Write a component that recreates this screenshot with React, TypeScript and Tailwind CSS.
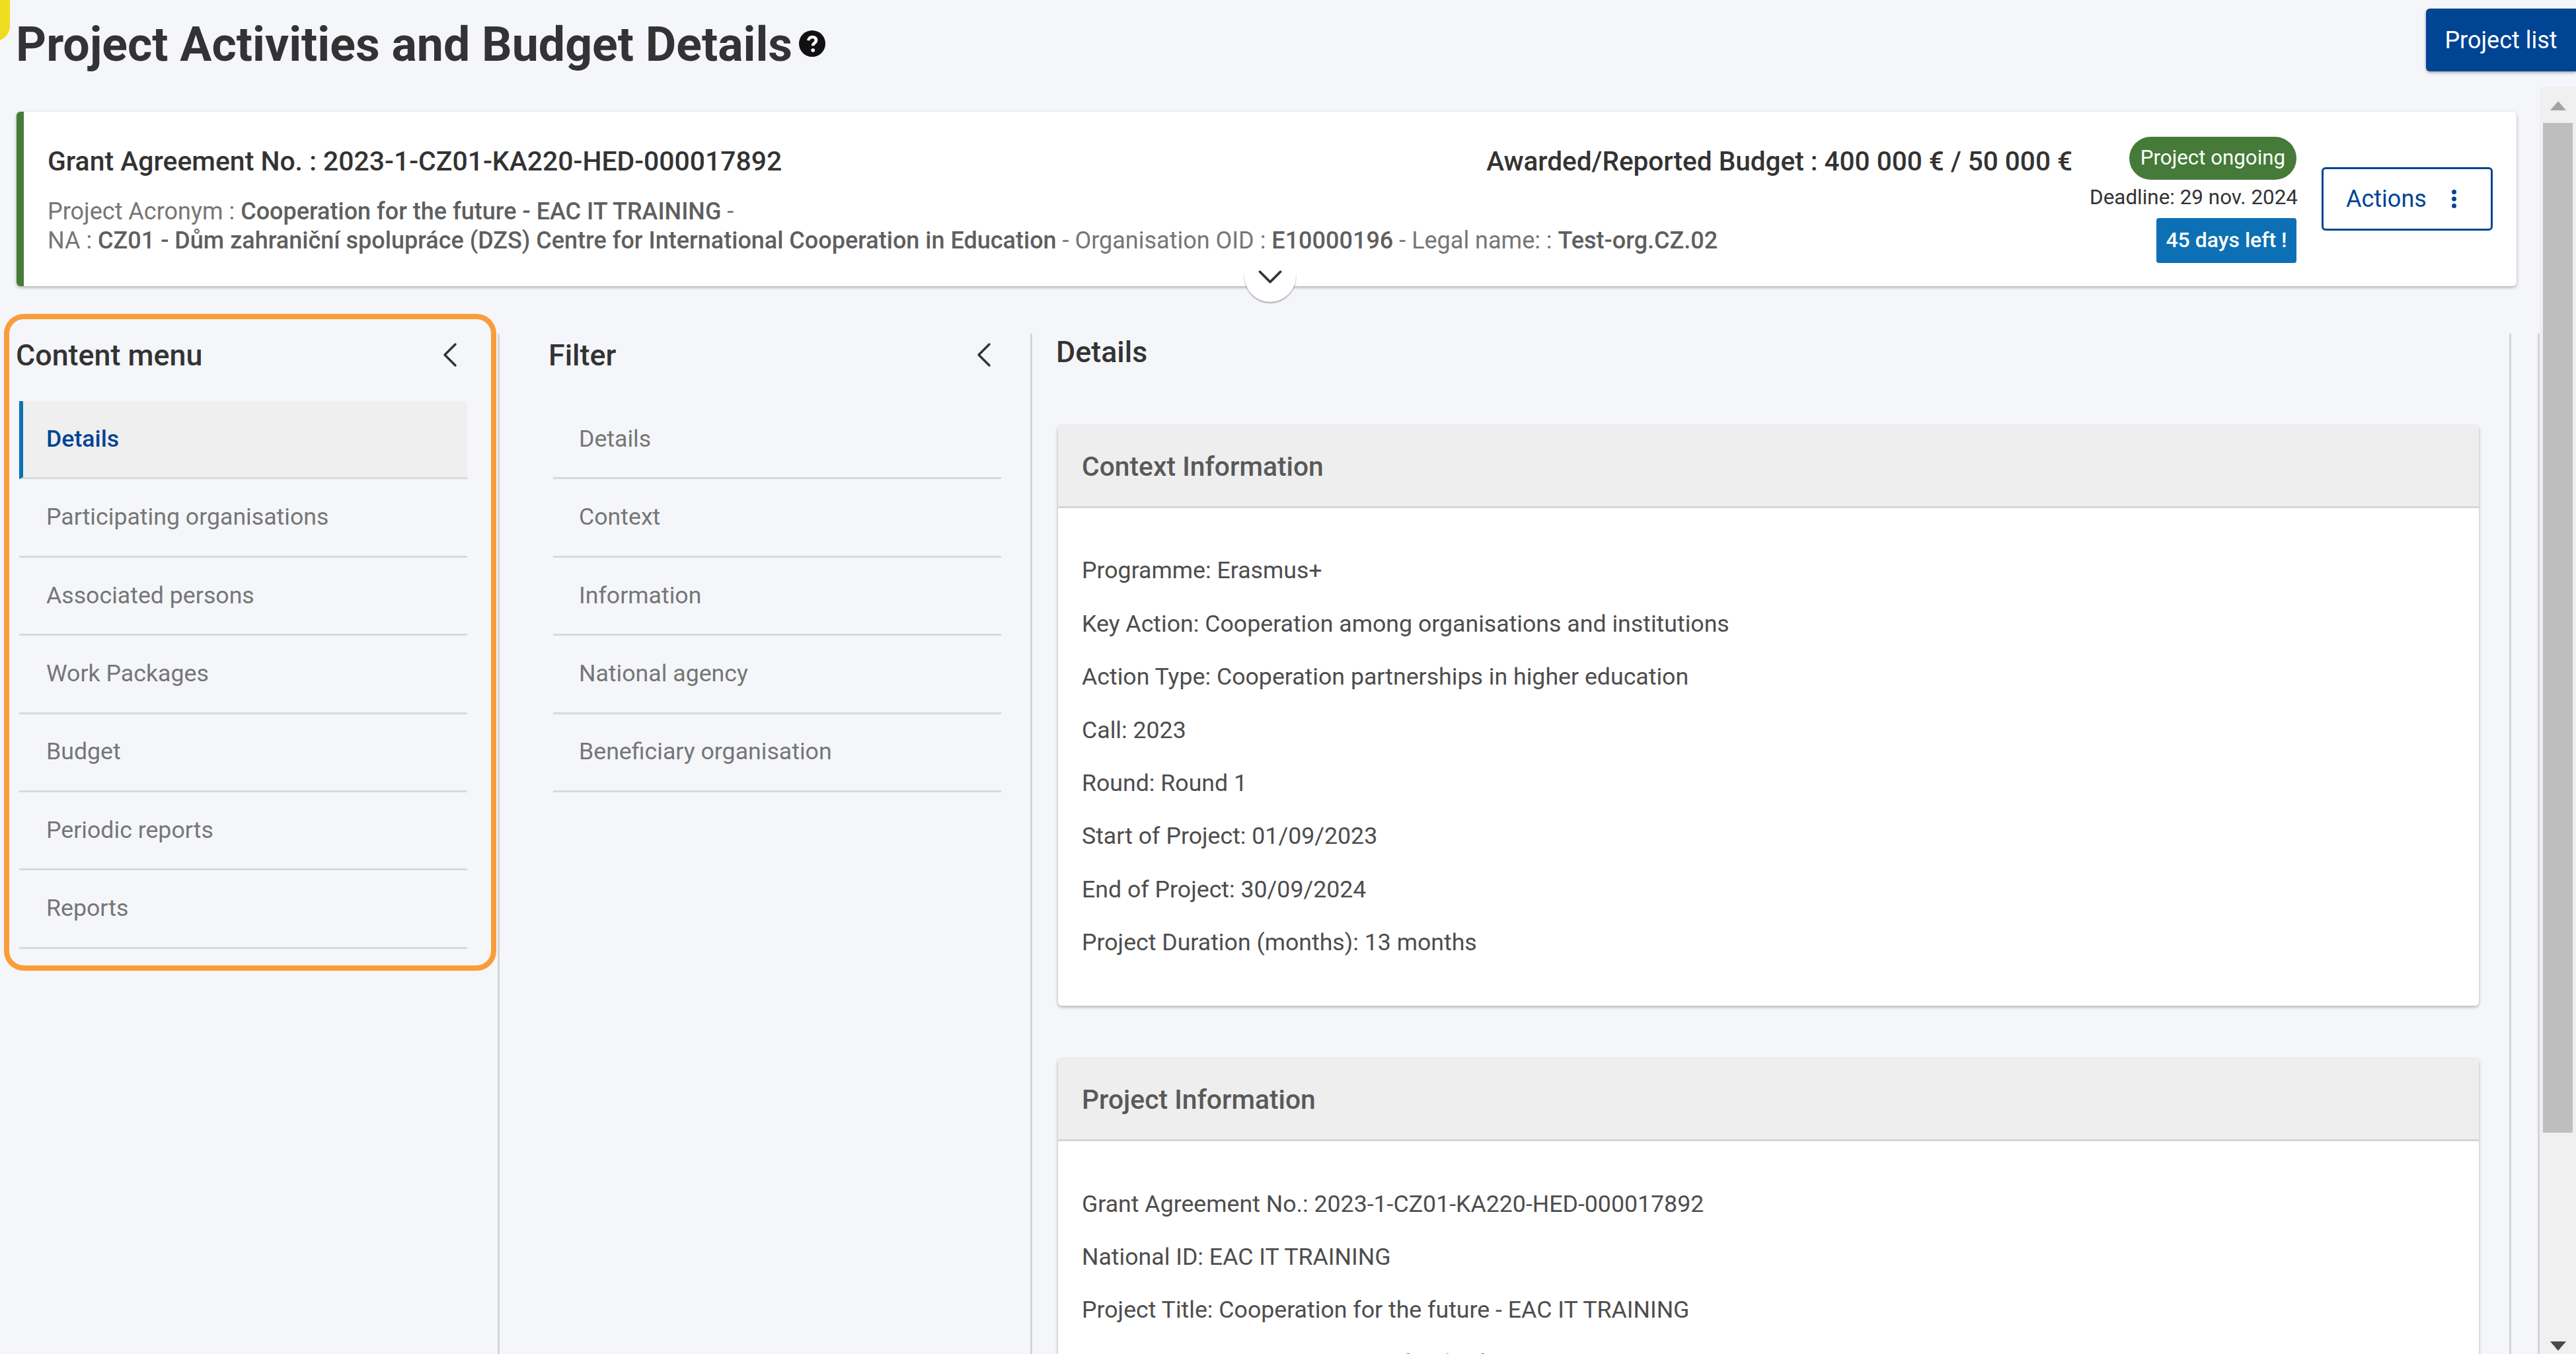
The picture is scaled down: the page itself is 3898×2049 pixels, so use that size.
import { ChevronDown, ChevronLeft } from "lucide-react";

const contentMenu = [
  "Details",
  "Participating organisations",
  "Associated persons",
  "Work Packages",
  "Budget",
  "Periodic reports",
  "Reports",
];

const filterMenu = ["Details", "Context", "Information", "National agency", "Beneficiary organisation"];

const contextLines = [
  "Programme: Erasmus+",
  "Key Action: Cooperation among organisations and institutions",
  "Action Type: Cooperation partnerships in higher education",
  "Call: 2023",
  "Round: Round 1",
  "Start of Project: 01/09/2023",
  "End of Project: 30/09/2024",
  "Project Duration (months): 13 months",
];

const projectLines = [
  "Grant Agreement No.: 2023-1-CZ01-KA220-HED-000017892",
  "National ID: EAC IT TRAINING",
  "Project Title: Cooperation for the future - EAC IT TRAINING",
  "Project Acronym: Cooperation for the future - EAC IT TRAINING",
];

function SideMenu({
  title,
  items,
  active,
  rowsClass,
  itemClass,
}: {
  title: string;
  items: string[];
  active?: string;
  rowsClass: string;
  itemClass: string;
}) {
  return (
    <div className="flex flex-col">
      <div className="mb-[36px] flex h-[66px] items-center justify-between">
        <h2 className="text-[44.8px] leading-none font-medium text-[#333333]">{title}</h2>
        <ChevronLeft size={64} strokeWidth={1.3} className="mt-[-2px] mr-[-6px] text-[#333333]" />
      </div>
      <div className={rowsClass}>
        {items.map((item) => (
          <div
            key={item}
            className={
              item === active
                ? "flex h-[118.4px] items-center border-b-[3px] border-l-[6px] border-b-[#d8d9dc] border-l-[#0e70b4] bg-[#efefef] pl-[35px] text-[35.7px] font-medium text-[#004494]"
                : `flex h-[118.4px] items-center border-b-[3px] border-b-[#d8d9dc] text-[35.7px] text-[#767676] ${itemClass}`
            }
          >
            {item}
          </div>
        ))}
      </div>
    </div>
  );
}

function InfoCard({ title, lines, className }: { title: string; lines: string[]; className?: string }) {
  return (
    <div className={`rounded-[6px] bg-white shadow-[0_2px_5px_rgba(0,0,0,0.3)] ${className ?? ""}`}>
      <div className="flex h-[125px] items-center rounded-t-[6px] border-b-[3px] border-[#d6d6d6] bg-[#eeeeee] pt-[3px] pl-[36px] text-[40.8px] font-medium text-[#595959]">
        {title}
      </div>
      <div className="px-[36px] pt-[55px] pb-[55px]">
        {lines.map((line) => (
          <div key={line} className="flex h-[80.4px] items-center text-[35.7px] text-[#4d4d4d]">
            {line}
          </div>
        ))}
      </div>
    </div>
  );
}

export default function App() {
  return (
    <div
      className="relative h-[2049px] w-[3898px] overflow-hidden bg-[#f5f6fa]"
      style={{ fontFamily: "Roboto, sans-serif" }}
    >
      <div className="absolute top-[-28px] left-[-30px] h-[90px] w-[45px] rounded-full bg-[#f0dc1e]" />

      <header className="flex h-[132px] items-start justify-between">
        <div className="flex items-center gap-[10px] pt-[26px] pl-[24px]">
          <h1 className="text-[71.6px] leading-[84px] font-bold text-[#333333]">
            Project Activities and Budget Details
          </h1>
          <svg viewBox="0 0 24 24" className="mt-[-5px] h-[40px] w-[40px]">
            <circle cx="12" cy="12" r="12" fill="#111111" />
            <path
              d="M8.6 9.2c.2-2 1.7-3.2 3.6-3.2 2 0 3.4 1.2 3.4 2.9 0 1.3-.7 2-1.7 2.7-.9.6-1.2 1-1.2 1.9v.5"
              fill="none"
              stroke="#ffffff"
              strokeWidth="2.8"
            />
            <circle cx="12.7" cy="18" r="1.7" fill="#ffffff" />
          </svg>
        </div>
        <button className="mt-[13px] flex h-[95px] w-[227px] items-center justify-center rounded-l-[6px] bg-[#004494] text-[36px] text-white shadow-[0_2px_4px_rgba(0,0,0,0.35)]">
          Project list
        </button>
      </header>

      <div className="flex">
        <main className="min-w-0 flex-1">
          <section className="mt-[37px] mr-[35px] ml-[25px] flex h-[264px] items-start rounded-[6px] border-l-[11px] border-[#467a39] bg-white shadow-[0_2px_5px_rgba(0,0,0,0.3)]">
            <div className="mr-[86px] min-w-0 flex-1 pl-[36px] whitespace-nowrap">
              <div className="mt-[51px] flex items-center justify-between text-[40.9px] leading-[48px] font-medium text-[#333333]">
                <span>Grant Agreement No. : 2023-1-CZ01-KA220-HED-000017892</span>
                <span className="mr-[-2px] text-[40.5px]">Awarded/Reported Budget : 400 000 € / 50 000 €</span>
              </div>
              <div className="mt-[30px] text-[36px] leading-[44px] text-[#767676]">
                Project Acronym : <b className="font-medium text-[#5f5f5f]">Cooperation for the future - EAC IT TRAINING</b> -
                <br />
                NA : <b className="font-medium text-[#5f5f5f]">CZ01 - Dům zahraniční spolupráce (DZS) Centre for International Cooperation in Education</b> - Organisation OID : <b className="font-medium text-[#5f5f5f]">E10000196</b> - Legal name: : <b className="font-medium text-[#5f5f5f]">Test-org.CZ.02</b>
              </div>
            </div>
            <div className="flex w-[255px] shrink-0 flex-col items-end pt-[38px]">
              <span className="flex h-[65px] w-[253px] items-center justify-center rounded-full bg-[#467a39] text-[31.3px] text-white">
                Project ongoing
              </span>
              <span className="mt-[7px] mr-[-2px] text-[31.4px] leading-[40px] whitespace-nowrap text-[#333333]">
                Deadline: 29 nov. 2024
              </span>
              <span className="mt-[11px] flex h-[68px] w-[212px] items-center justify-center rounded-[4px] bg-[#0e70b4] pb-[2px] text-[32px] font-medium text-white">
                45 days left !
              </span>
            </div>
            <button className="mt-[84px] mr-[36px] ml-[38px] flex h-[96px] w-[259px] shrink-0 items-center gap-[37px] rounded-[6px] border-[3px] border-[#004494] bg-white pl-[34px] text-[36px] text-[#004494]">
              Actions
              <svg viewBox="0 0 8 32" className="h-[28px] w-[9px]" fill="#004494">
                <circle cx="4" cy="4" r="4" />
                <circle cx="4" cy="16" r="4" />
                <circle cx="4" cy="28" r="4" />
              </svg>
            </button>
          </section>

          <div className="relative z-10 mt-[-20px] ml-[1883px] flex h-[44px] w-[78px] items-start justify-center rounded-b-full bg-white shadow-[0_2px_2px_rgba(0,0,0,0.3)]">
            <ChevronDown size={62} strokeWidth={1.5} className="mt-[-25px] text-[#333333]" />
          </div>

          <div className="mt-[48px] flex h-[1600px]">
            <div className="w-[756px] shrink-0 border-r-[3px] border-[#d3d4d8] pr-[46px] pl-[24px]">
              <SideMenu
                title="Content menu"
                items={contentMenu}
                active="Details"
                rowsClass="ml-[5px]"
                itemClass="pl-[41px]"
              />
            </div>
            <div className="w-[806px] shrink-0 border-r-[3px] border-[#d3d4d8] pr-[44px] pl-[74px]">
              <SideMenu title="Filter" items={filterMenu} rowsClass="ml-[7px]" itemClass="pl-[39px]" />
            </div>
            <div className="w-[2238px] shrink-0 border-r-[3px] border-[#d3d4d8] pr-[46px] pl-[39px]">
              <h2 className="ml-[-3px] flex h-[56px] items-center text-[44.8px] font-medium text-[#333333]">Details</h2>
              <InfoCard className="mt-[83px]" title="Context Information" lines={contextLines} />
              <InfoCard className="mt-[80px]" title="Project Information" lines={projectLines} />
            </div>
            <div className="flex-1 border-r-[3px] border-[#d3d4d8]" />
          </div>
        </main>

        <div className="flex h-[1917px] w-[55px] shrink-0 flex-col items-center bg-[#f0f0f0]">
          <svg viewBox="0 0 24 14" className="mt-[21px] h-[14px] w-[24px]" fill="#a3a3a3">
            <path d="M12 0 24 14H0Z" />
          </svg>
          <div className="mt-[19px] h-[1528px] w-[45px] bg-[#bebebe]" />
          <svg viewBox="0 0 24 14" className="mt-[316px] h-[14px] w-[24px]" fill="#4a4a4a">
            <path d="M0 0H24L12 14Z" />
          </svg>
        </div>
      </div>

      <div className="pointer-events-none absolute top-[475px] left-[6px] h-[994px] w-[745px] rounded-[30px] border-[8px] border-[#f99d3a]" />
    </div>
  );
}
